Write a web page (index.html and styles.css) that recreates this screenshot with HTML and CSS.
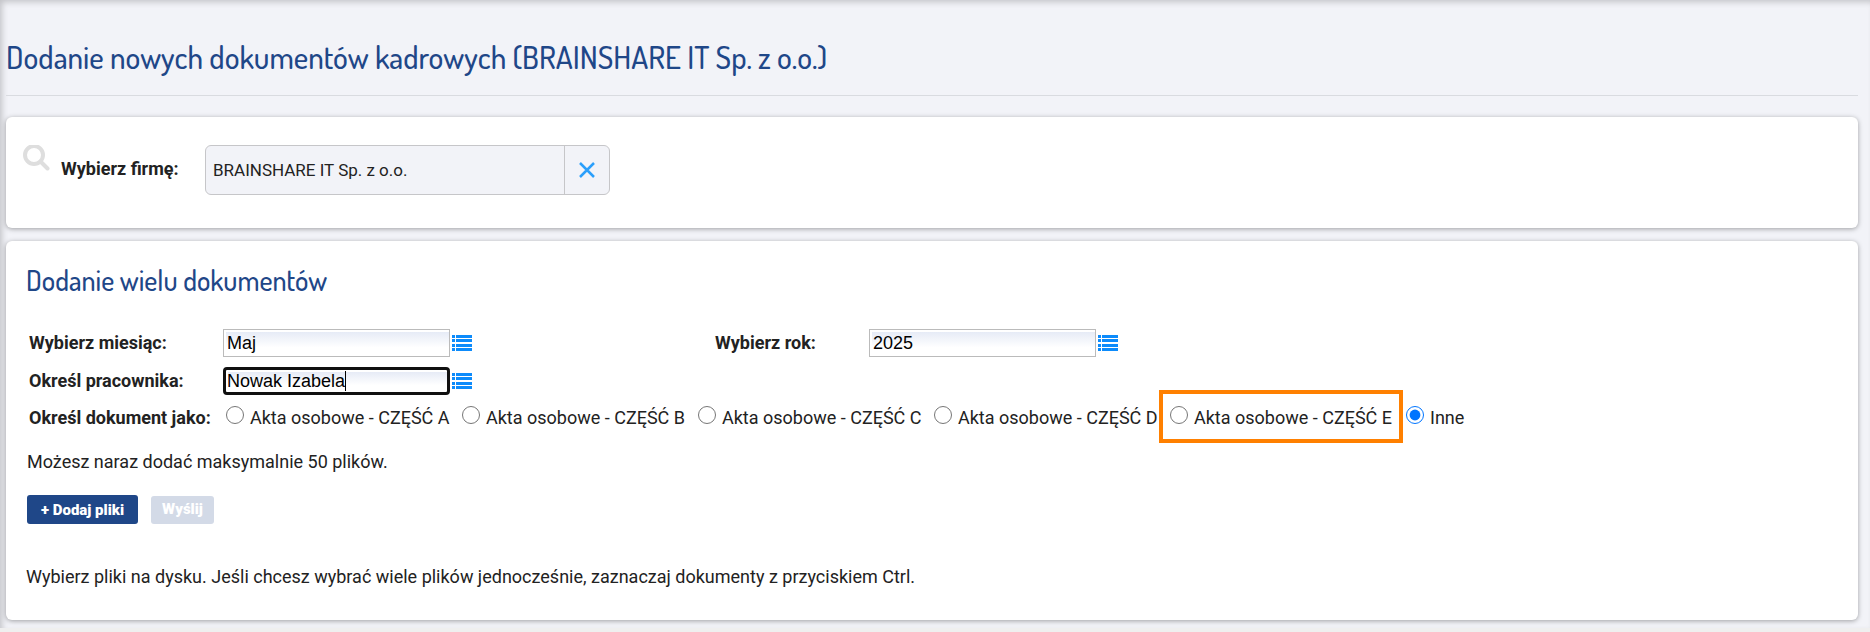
FILE: index.html
```
<!DOCTYPE html>
<html lang="pl">
<head>
    <meta charset="UTF-8">
    <meta name="viewport" content="width=device-width, initial-scale=1.0">
    <title>Dodanie nowych dokumentów kadrowych</title>
    <link rel="stylesheet" href="styles.css">
</head>
<body>
    <svg class="sprite" aria-hidden="true">
        <symbol id="icon-list" viewBox="0 0 20 16">
            <path d="M0 0h3v3H0zM4 0h16v3H4zM0 4h3v3H0zM4 4h16v3H4zM0 9h3v3H0zM4 9h16v3H4zM0 13h3v3H0zM4 13h16v3H4z" fill="#0d8bfb"/>
        </symbol>
    </svg>

    <main class="page">
        <header class="page-header">
            <h1>Dodanie nowych dokumentów kadrowych (BRAINSHARE IT Sp. z o.o.)</h1>
        </header>

        <!-- Wybór firmy -->
        <section class="panel company">
            <svg class="search-icon" viewBox="0 0 27 27" aria-hidden="true">
                <circle cx="11" cy="10" r="9" fill="none" stroke="#dedede" stroke-width="4"/>
                <path d="M17.500 16.500l7 7" stroke="#dedede" stroke-width="4" stroke-linecap="round"/>
            </svg>
            <label class="company-label" for="company">Wybierz firmę:</label>
            <div class="company-field">
                <input type="text" id="company" value="BRAINSHARE IT Sp. z o.o." readonly>
                <button type="button" aria-label="Wyczyść">
                    <svg width="18" height="18" viewBox="0 0 18 18"><path d="M2 2l14 14M16 2L2 16" stroke="#2b9ffb" stroke-width="2.500"/></svg>
                </button>
            </div>
        </section>

        <!-- Dodanie dokumentów -->
        <section class="panel documents">
            <h2>Dodanie wielu dokumentów</h2>
            <form>
                <div class="form-grid">
                    <label for="month">Wybierz miesiąc:</label>
                    <div class="picker">
                        <input type="text" id="month" value="Maj">
                        <button type="button" aria-label="Lista miesięcy"><svg><use href="#icon-list"/></svg></button>
                    </div>
                    <label for="year">Wybierz rok:</label>
                    <div class="picker">
                        <input type="text" id="year" value="2025">
                        <button type="button" aria-label="Lista lat"><svg><use href="#icon-list"/></svg></button>
                    </div>

                    <label for="employee">Określ pracownika:</label>
                    <div class="picker active">
                        <input type="text" id="employee" value="Nowak Izabela">
                        <span class="caret"></span>
                        <button type="button" aria-label="Lista pracowników"><svg><use href="#icon-list"/></svg></button>
                    </div>
                </div>

                <div class="type-row" role="radiogroup" aria-labelledby="type-label">
                    <span class="type-label" id="type-label">Określ dokument jako:</span>
                    <label class="option"><input type="radio" name="type"><span>Akta osobowe - CZĘŚĆ A</span></label>
                    <label class="option"><input type="radio" name="type"><span>Akta osobowe - CZĘŚĆ B</span></label>
                    <label class="option"><input type="radio" name="type"><span>Akta osobowe - CZĘŚĆ C</span></label>
                    <label class="option"><input type="radio" name="type"><span>Akta osobowe - CZĘŚĆ D</span></label>
                    <label class="option marked"><input type="radio" name="type"><span>Akta osobowe - CZĘŚĆ E</span></label>
                    <label class="option"><input type="radio" name="type" checked><span>Inne</span></label>
                </div>

                <p class="limit">Możesz naraz dodać maksymalnie 50 plików.</p>
                <div class="actions">
                    <button type="button" class="btn">+ Dodaj pliki</button>
                    <button type="submit" class="btn btn-send" disabled>Wyślij</button>
                </div>
                <p class="hint">Wybierz pliki na dysku. Jeśli chcesz wybrać wiele plików jednocześnie, zaznaczaj dokumenty z przyciskiem Ctrl.</p>
            </form>
        </section>
    </main>
</body>
</html>
```
FILE: styles.css
```
* {
    box-sizing: border-box;
}

body {
    margin: 0;
    background-color: #efefef;
    color: #222;
    font-family: Roboto, sans-serif;
    font-size: 18px;
    line-height: 24px;
}

h1, h2, p {
    margin: 0;
}

h1, h2 {
    color: #1f4788;
    font-family: Dosis, Roboto, sans-serif;
    font-weight: 500;
}

.sprite {
    display: none;
}

.page {
    padding: 0 12px 8px 6px;
    background-color: #f2f3f8;
    box-shadow: inset 3px 3px 6px -1px rgba(0, 0, 0, 0.2);
}

.page-header {
    padding: 37px 0 18px;
    margin-bottom: 21px;
    border-bottom: 1px solid #d9dbe0;
}

h1 {
    font-size: 31px;
    line-height: 40px;
}

h2 {
    font-size: 28px;
    line-height: 36px;
}

.panel {
    background-color: #fff;
    border-radius: 6px;
    box-shadow: 0 1px 5px rgba(0, 0, 0, 0.35);
}

/* Firma */
.company {
    display: flex;
    align-items: flex-start;
    padding: 28px 17px 33px;
    margin-bottom: 13px;
}

.search-icon {
    width: 27px;
    height: 27px;
}

.company-label {
    width: 144px;
    margin-left: 11px;
    line-height: 48px;
    font-weight: bold;
}

.company-field {
    display: flex;
    width: 405px;
    height: 50px;
    border: 1px solid #c6c6c9;
    border-radius: 6px;
    background-color: #f2f3f8;
    overflow: hidden;
}

.company-field input {
    flex: 1;
    min-width: 0;
    padding: 0 7px;
    border: 0;
    background: none;
    color: #222;
    font: 17px Roboto, sans-serif;
}

.company-field button {
    display: flex;
    align-items: center;
    justify-content: center;
    width: 45px;
    padding: 0;
    border: 0;
    border-left: 1px solid #c6c6c9;
    background: none;
}

/* Formularz */
.documents {
    padding: 21px 20px 31px;
}

.form-grid {
    display: grid;
    grid-template-columns: 194px 492px 154px 1fr;
    row-gap: 10px;
    align-items: center;
    padding: 31px 3px 0;
}

.form-grid label,
.type-label {
    font-weight: bold;
}

.picker {
    display: flex;
    align-items: center;
    gap: 2px;
    position: relative;
}

.picker input {
    width: 227px;
    height: 28px;
    padding: 0 3px;
    border: 1px solid #bbb;
    background: linear-gradient(#e6ebf6, #fff 60%) 2px 2px no-repeat #fff;
    color: #000;
    font: 18px "Liberation Sans", Arial, sans-serif;
}

.picker.active input {
    padding: 0 1px;
    border: 3px solid #101010;
    border-radius: 4px;
}

.caret {
    position: absolute;
    top: 4px;
    left: 122px;
    width: 1px;
    height: 20px;
    background-color: #000;
}

.picker button {
    display: flex;
    padding: 0;
    border: 0;
    background: none;
}

.picker svg {
    width: 20px;
    height: 16px;
}

.type-row {
    display: flex;
    align-items: center;
    padding: 11px 3px 0;
}

.type-label {
    width: 195px;
}

.option {
    display: flex;
    align-items: center;
    gap: 6px;
    width: 236px;
    padding-left: 2px;
    position: relative;
    white-space: nowrap;
}

.option input {
    width: 18px;
    height: 18px;
    margin: 0 0 6px;
}

.option.marked::before {
    content: "";
    position: absolute;
    top: -16px;
    left: -9px;
    width: 236px;
    height: 45px;
    border: 4px solid #ff8000;
}

.limit {
    padding: 20px 1px 0;
}

.actions {
    display: flex;
    align-items: flex-end;
    gap: 13px;
    padding: 21px 1px 0;
}

.btn {
    height: 29px;
    padding: 0 14px;
    border: 0;
    border-radius: 3px;
    background-color: #1f4788;
    color: #fff;
    font: 900 15px Roboto, sans-serif;
}

.btn-send {
    height: 28px;
    padding: 0 11px 3px;
    background-color: #d3dae7;
}

.hint {
    padding-top: 41px;
}
```
